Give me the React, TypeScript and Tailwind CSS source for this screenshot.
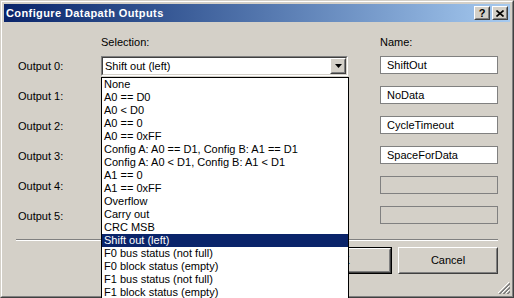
import React from "react";

const ITEMS = [
  "None",
  "A0 == D0",
  "A0 < D0",
  "A0 == 0",
  "A0 == 0xFF",
  "Config A: A0 == D1, Config B: A1 == D1",
  "Config A: A0 < D1, Config B: A1 < D1",
  "A1 == 0",
  "A1 == 0xFF",
  "Overflow",
  "Carry out",
  "CRC MSB",
  "Shift out (left)",
  "F0 bus status (not full)",
  "F0 block status (empty)",
  "F1 bus status (not full)",
  "F1 block status (empty)",
];
const SELECTED = 12;

const NAMES = ["ShiftOut", "NoData", "CycleTimeout", "SpaceForData", "", ""];

// raised 3d box like a classic win button
function Raised({ className = "", children }: { className?: string; children?: React.ReactNode }) {
  return (
    <div
      className={`border border-t-white border-l-white border-r-[#404040] border-b-[#404040] ${className}`}
    >
      <div className="w-full h-full border border-t-[#d4d0c8] border-l-[#d4d0c8] border-r-[#808080] border-b-[#808080] flex items-center justify-center">
        {children}
      </div>
    </div>
  );
}

function ComboBox({ value }: { value: string }) {
  return (
    <div className="w-[247px] h-[20px] border border-t-[#808080] border-l-[#808080] border-r-white border-b-white">
      <div className="w-full h-full border border-t-[#404040] border-l-[#404040] border-r-[#d4d0c8] border-b-[#d4d0c8] bg-white flex items-center">
        <span className="flex-1 pl-[2px] leading-[13px]">{value}</span>
        <Raised className="w-[16px] h-[16px] bg-[#d4d0c8]">
          <svg width="7" height="4" viewBox="0 0 7 4">
            <path d="M0 0h7L3.5 4z" fill="#000" />
          </svg>
        </Raised>
      </div>
    </div>
  );
}

function NameBox({ value }: { value: string }) {
  const disabled = value === "";
  return (
    <div
      className={`w-[118px] h-[18px] border border-[#808080] flex items-center pl-[6px] leading-[13px] ${
        disabled ? "bg-[#d4d0c8]" : "bg-white"
      }`}
    >
      {value}
    </div>
  );
}

export default function App() {
  return (
    <div className="relative w-[514px] h-[298px] overflow-hidden bg-[#d4d0c8] text-[11px] text-black font-['Liberation_Sans',Arial,sans-serif]">
      <div className="w-full h-full border border-t-[#d4d0c8] border-l-[#d4d0c8] border-r-[#404040] border-b-[#404040]">
        <div className="w-full h-full border border-t-white border-l-white border-r-[#808080] border-b-[#808080] p-[2px] flex flex-col">
          {/* title bar */}
          <div className="h-[18px] bg-gradient-to-r from-[#0a246a] to-[#a6caf0] flex items-center pl-[2px] pr-[2px]">
            <span className="flex-1 text-white font-bold tracking-[0.4px] leading-[13px]">
              Configure Datapath Outputs
            </span>
            <Raised className="w-[16px] h-[14px] bg-[#d4d0c8]">
              <span className="font-bold text-[11px] leading-[10px]">?</span>
            </Raised>
            <Raised className="w-[16px] h-[14px] bg-[#d4d0c8] ml-[2px]">
              <svg width="8" height="7" viewBox="0 0 8 7">
                <path d="M0.5 0.5L7.5 6.5M7.5 0.5L0.5 6.5" stroke="#000" strokeWidth="1.6" />
              </svg>
            </Raised>
          </div>

          {/* body */}
          <div className="flex-1 relative flex flex-col pt-[14px]">
            <div className="flex h-[13px] leading-[13px]">
              <div className="w-[97px]" />
              <div className="w-[279px]">Selection:</div>
              <div>Name:</div>
            </div>

            <div className="flex flex-col mt-[7px]">
              {NAMES.map((name, i) => (
                <div key={i} className="flex h-[30px] items-start">
                  <div className="w-[97px] pl-[14px] pt-[4px] leading-[13px]">Output {i}:</div>
                  <div className="w-[279px]">{i === 0 && <ComboBox value={ITEMS[SELECTED]} />}</div>
                  <NameBox value={name} />
                </div>
              ))}
            </div>

            <div className="mt-[3px] mx-[12px] border-t border-t-[#808080] border-b border-b-white" />

            <div className="flex justify-end gap-[6px] mt-[6px] pr-[12px]">
              <div className="w-[100px] h-[27px] border border-black">
                <Raised className="w-full h-full">OK</Raised>
              </div>
              <Raised className="w-[100px] h-[27px]">Cancel</Raised>
            </div>

            {/* size grip */}
            <svg className="absolute right-0 bottom-0" width="12" height="12" viewBox="0 0 12 12">
              <path d="M11 0L0 11M11 4L4 11M11 8L8 11" stroke="#ffffff" strokeWidth="1" />
              <path d="M12 1L1 12M12 2L2 12M12 5L5 12M12 6L6 12M12 9L9 12M12 10L10 12" stroke="#808080" strokeWidth="1" />
            </svg>
          </div>
        </div>
      </div>

      {/* open dropdown list */}
      <div className="absolute left-[101px] top-[77px] w-[248px] border border-black bg-white">
        {ITEMS.map((item, i) => (
          <div
            key={i}
            className={`h-[13px] leading-[13px] pl-[2px] whitespace-nowrap ${
              i === SELECTED ? "bg-[#0a246a] text-white" : ""
            }`}
          >
            {item}
          </div>
        ))}
      </div>
    </div>
  );
}
